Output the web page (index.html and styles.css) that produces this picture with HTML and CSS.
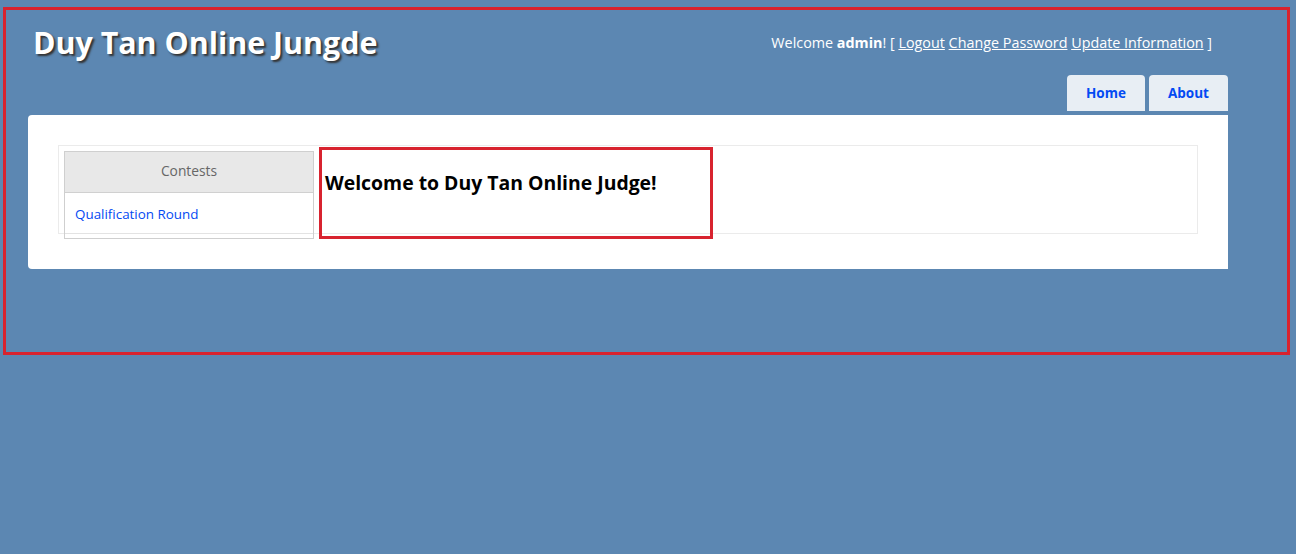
FILE: index.html
```html
<!DOCTYPE html>
<html>
<head>
<meta charset="utf-8">
<title>Duy Tan Online Judge</title>
<link rel="stylesheet" href="styles.css">
</head>
<body>
<div class="page">
  <div class="header">
    <div class="title-row">
      <h1 class="title">Duy Tan Online Jungde</h1>
      <div class="login">Welcome <b>admin</b>! [ <a href="#">Logout</a> <a href="#">Change Password</a> <a href="#">Update Information</a> ]</div>
    </div>
    <ul class="menu">
      <li><a href="#">Home</a></li>
      <li><a href="#">About</a></li>
    </ul>
  </div>
  <div class="main">
    <div class="layout">
      <div class="sidebar">
        <div class="side-head">Contests</div>
        <div class="side-item"><a href="#">Qualification Round</a></div>
      </div>
      <div class="content">
        <h2 class="welcome">Welcome to Duy Tan Online Judge!</h2>
      </div>
    </div>
  </div>
</div>
<div class="mark mark-page"></div>
<div class="mark mark-welcome"></div>
</body>
</html>
```
FILE: styles.css
```css
html, body {
  margin: 0;
  padding: 0;
}
body {
  background: #5c87b2;
  font-family: "Open Sans", "DejaVu Sans", sans-serif;
  font-size: 14px;
  color: #696969;
  height: 554px;
  position: relative;
}
.page {
  width: 1200px;
  margin-left: 28px;
}
.header {
  height: 115px;
  display: flex;
  flex-direction: column;
}
.title-row {
  display: flex;
  justify-content: space-between;
  align-items: center;
  height: 75px;
  padding: 10px 16px 0 5px;
  box-sizing: border-box;
}
.title {
  margin: 0;
  font-size: 30.4px;
  line-height: 40px;
  font-weight: bold;
  color: #fff;
  text-shadow: 2px 2px 2px #333;
}
.login {
  color: #fff;
  font-size: 14.35px;
}
.login a {
  color: #fff;
}
.menu {
  list-style: none;
  margin: 0;
  padding: 0;
  display: flex;
  justify-content: flex-end;
  gap: 4px;
}
.menu li a {
  display: block;
  width: 78px;
  height: 36px;
  line-height: 36px;
  text-align: center;
  background: #e8eef4;
  color: #034af3;
  font-weight: bold;
  font-size: 13.5px;
  text-decoration: none;
  border-radius: 4px 4px 0 0;
}
.menu li + li a {
  width: 79px;
}
.main {
  background: #fff;
  border-radius: 4px 0 0 4px;
  padding: 30px 30px 30px 30px;
  height: 154px;
  box-sizing: border-box;
}
.layout {
  border: 1px solid #ebebeb;
  height: 89px;
  box-sizing: border-box;
  display: flex;
  align-items: flex-start;
  padding: 2px 5px;
}
.sidebar {
  width: 250px;
  height: 88px;
  box-sizing: border-box;
  border: 1px solid #cfcfcf;
  margin-top: 3px;
  flex: none;
}
.side-head {
  height: 40px;
  line-height: 38px;
  background: #e8e8e8;
  border-bottom: 1px solid #d0d0d0;
  text-align: center;
  color: #666;
  font-size: 13.8px;
}
.side-item {
  height: 40px;
  line-height: 42px;
  padding-left: 10px;
  border-bottom: 1px solid #e3e3e3;
  font-size: 13.4px;
}
.side-item a {
  color: #034af3;
  text-decoration: none;
}
.content {
  margin-left: 11px;
  flex: 1;
}
.welcome {
  margin: 21px 0 0 0;
  font-size: 19.4px;
  font-weight: bold;
  color: #000;
}
.mark {
  position: absolute;
  border: 3px solid #d8232f;
  box-sizing: border-box;
  pointer-events: none;
}
.mark-page {
  left: 3px;
  top: 7px;
  width: 1287px;
  height: 348px;
}
.mark-welcome {
  left: 319px;
  top: 147px;
  width: 394px;
  height: 92px;
}
```
